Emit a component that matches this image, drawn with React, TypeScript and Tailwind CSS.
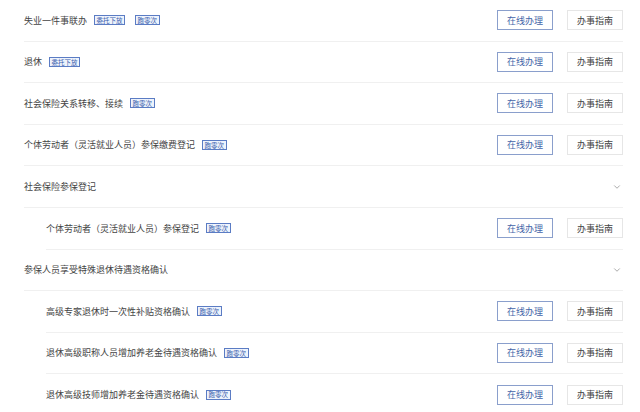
import { ChevronDown } from 'lucide-react';

type Item = { name: string; tags: string[]; sub?: boolean };
type Row = Item | { group: string };

const rows: Row[] = [
  { name: '失业一件事联办', tags: ['委托下放', '跑零次'] },
  { name: '退休', tags: ['委托下放'] },
  { name: '社会保险关系转移、接续', tags: ['跑零次'] },
  { name: '个体劳动者（灵活就业人员）参保缴费登记', tags: ['跑零次'] },
  { group: '社会保险参保登记' },
  { name: '个体劳动者（灵活就业人员）参保登记', tags: ['跑零次'], sub: true },
  { group: '参保人员享受特殊退休待遇资格确认' },
  { name: '高级专家退休时一次性补贴资格确认', tags: ['跑零次'], sub: true },
  { name: '退休高级职称人员增加养老金待遇资格确认', tags: ['跑零次'], sub: true },
  { name: '退休高级技师增加养老金待遇资格确认', tags: ['跑零次'], sub: true },
];

function Tag({ label }: { label: string }) {
  return (
    <span className="inline-flex items-center h-[10px] px-[1.5px] border border-[#5b7cc4] bg-[#eef3fc] text-[#3b5fae] text-[6.5px] leading-none">
      {label}
    </span>
  );
}

function ItemRow({ item }: { item: Item }) {
  return (
    <div
      className={`flex items-center justify-between h-[41.6px] border-b border-[#f0f0f0] ${
        item.sub ? 'ml-[22px]' : ''
      }`}
    >
      <div className="flex items-center gap-[7px]">
        <span className="text-[9px] text-[#444]">{item.name}</span>
        <div className="flex items-center gap-[10px]">
          {item.tags.map((t) => (
            <Tag key={t} label={t} />
          ))}
        </div>
      </div>
      <div className="flex items-center gap-[14px]">
        <button className="w-[56px] h-[20px] border border-[#8a9fcc] text-[#4565a8] text-[9px] bg-white">
          在线办理
        </button>
        <button className="w-[56px] h-[20px] border border-[#e6e6e6] text-[#444] text-[9px] bg-white">
          办事指南
        </button>
      </div>
    </div>
  );
}

export default function App() {
  return (
    <div
      className="w-[640px] h-[412px] overflow-hidden bg-white pl-[24px] pr-[17px]"
      style={{ fontFamily: '"Noto Sans CJK SC", "Noto Sans", sans-serif' }}
    >
      {rows.map((r, i) =>
        'group' in r ? (
          <div
            key={i}
            className="flex items-center justify-between h-[41.6px] border-b border-[#f0f0f0]"
          >
            <span className="text-[9px] text-[#444]">{r.group}</span>
            <ChevronDown className="w-[10px] h-[10px] text-[#777] mr-[1px]" strokeWidth={1.5} />
          </div>
        ) : (
          <ItemRow key={i} item={r} />
        )
      )}
    </div>
  );
}
